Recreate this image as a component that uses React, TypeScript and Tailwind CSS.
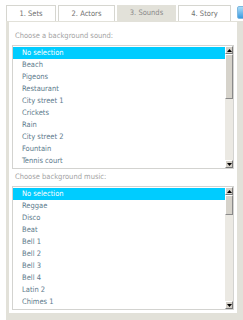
import React, { useState } from "react";

const sonidos = [
  "No selection",
  "Beach",
  "Pigeons",
  "Restaurant",
  "City street 1",
  "Crickets",
  "Rain",
  "City street 2",
  "Fountain",
  "Tennis court",
];

const musica = [
  "No selection",
  "Reggae",
  "Disco",
  "Beat",
  "Bell 1",
  "Bell 2",
  "Bell 3",
  "Bell 4",
  "Latin 2",
  "Chimes 1",
];

const tabs = [
  { label: "1. Sets", w: "w-[50px]" },
  { label: "2. Actors", w: "w-[57px]" },
  { label: "3. Sounds", w: "w-[59px]" },
  { label: "4. Story", w: "w-[53px]" },
];

const Arrow: React.FC<{ up?: boolean }> = ({ up }) => (
  <div className="w-[8px] h-[8px] bg-[#d4d0c8] border-t border-l border-t-white border-l-white border-b border-r border-b-[#7a7a7a] border-r-[#7a7a7a] flex items-center justify-center">
    <svg width="5" height="3" viewBox="0 0 5 3">
      {up ? <path d="M2.5 0 L5 3 L0 3 Z" fill="#000" /> : <path d="M0 0 L5 0 L2.5 3 Z" fill="#000" />}
    </svg>
  </div>
);

const ScrollBar: React.FC<{ thumb: string }> = ({ thumb }) => (
  <div className="w-[8px] flex flex-col bg-[#ebe9e3]">
    <Arrow up />
    <div className={`${thumb} bg-[#d6d3cb] border-t border-l border-t-white border-l-white border-b border-r border-b-[#8a8a8a] border-r-[#8a8a8a]`} />
    <div className="flex-1" />
    <Arrow />
  </div>
);

const ListBox: React.FC<{ items: string[]; thumb: string }> = ({ items, thumb }) => {
  const [sel, setSel] = useState(0);
  return (
    <div className="flex border border-[#d3d3d0] bg-white">
      <div className="flex-1 py-[1px]">
        {items.map((it, i) => (
          <div
            key={it}
            onClick={() => setSel(i)}
            className={`h-[12px] leading-[12px] pl-[9px] ${
              i === sel ? "bg-[#00ccff] text-white" : "text-[#5d7a8c]"
            }`}
          >
            {it}
          </div>
        ))}
      </div>
      <ScrollBar thumb={thumb} />
    </div>
  );
};

export default function App() {
  const [activo, setActivo] = useState(2);

  return (
    <div
      className="w-[243px] h-[320px] overflow-hidden bg-white text-[7.5px]"
      style={{ fontFamily: '"DejaVu Sans Condensed", "Liberation Sans", sans-serif' }}
    >
      <div className="flex items-end gap-[2px] pt-[5px] pl-[6px]">
        {tabs.map((t, i) => (
          <button
            key={t.label}
            onClick={() => setActivo(i)}
            className={`${t.w} shrink-0 flex items-center justify-center ${
              i === activo
                ? "h-[16px] bg-[#e2e1d9] text-[#8a8a8a]"
                : "h-[16px] bg-white border border-b-0 border-[#d6d6d0] text-[#6f6f6f]"
            }`}
          >
            {t.label}
          </button>
        ))}
        <div className="ml-[4px] mb-[2px] shrink-0 w-[14px] h-[13px] rounded-[2px] bg-gradient-to-b from-[#a8dcf7] to-[#3a9be0] border border-[#7fb8e0]" />
      </div>

      <div className="ml-[6px] w-[237px] bg-[#e2e1d9] pt-[1px] pl-[3px] pr-[6px] pb-[7px]">
        <div className="bg-white px-[3px] pt-[8px] pb-[3px]">
          <div className="h-[12px] leading-[12px] pl-[3px] mb-[3px] text-[#a3a3a3]">
            Choose a background sound:
          </div>
          <ListBox items={sonidos} thumb="h-[45px]" />
          <div className="h-[12px] leading-[12px] pl-[3px] mt-[2px] mb-[3px] text-[#a3a3a3]">
            Choose background music:
          </div>
          <ListBox items={musica} thumb="h-[20px]" />
        </div>
      </div>
    </div>
  );
}
